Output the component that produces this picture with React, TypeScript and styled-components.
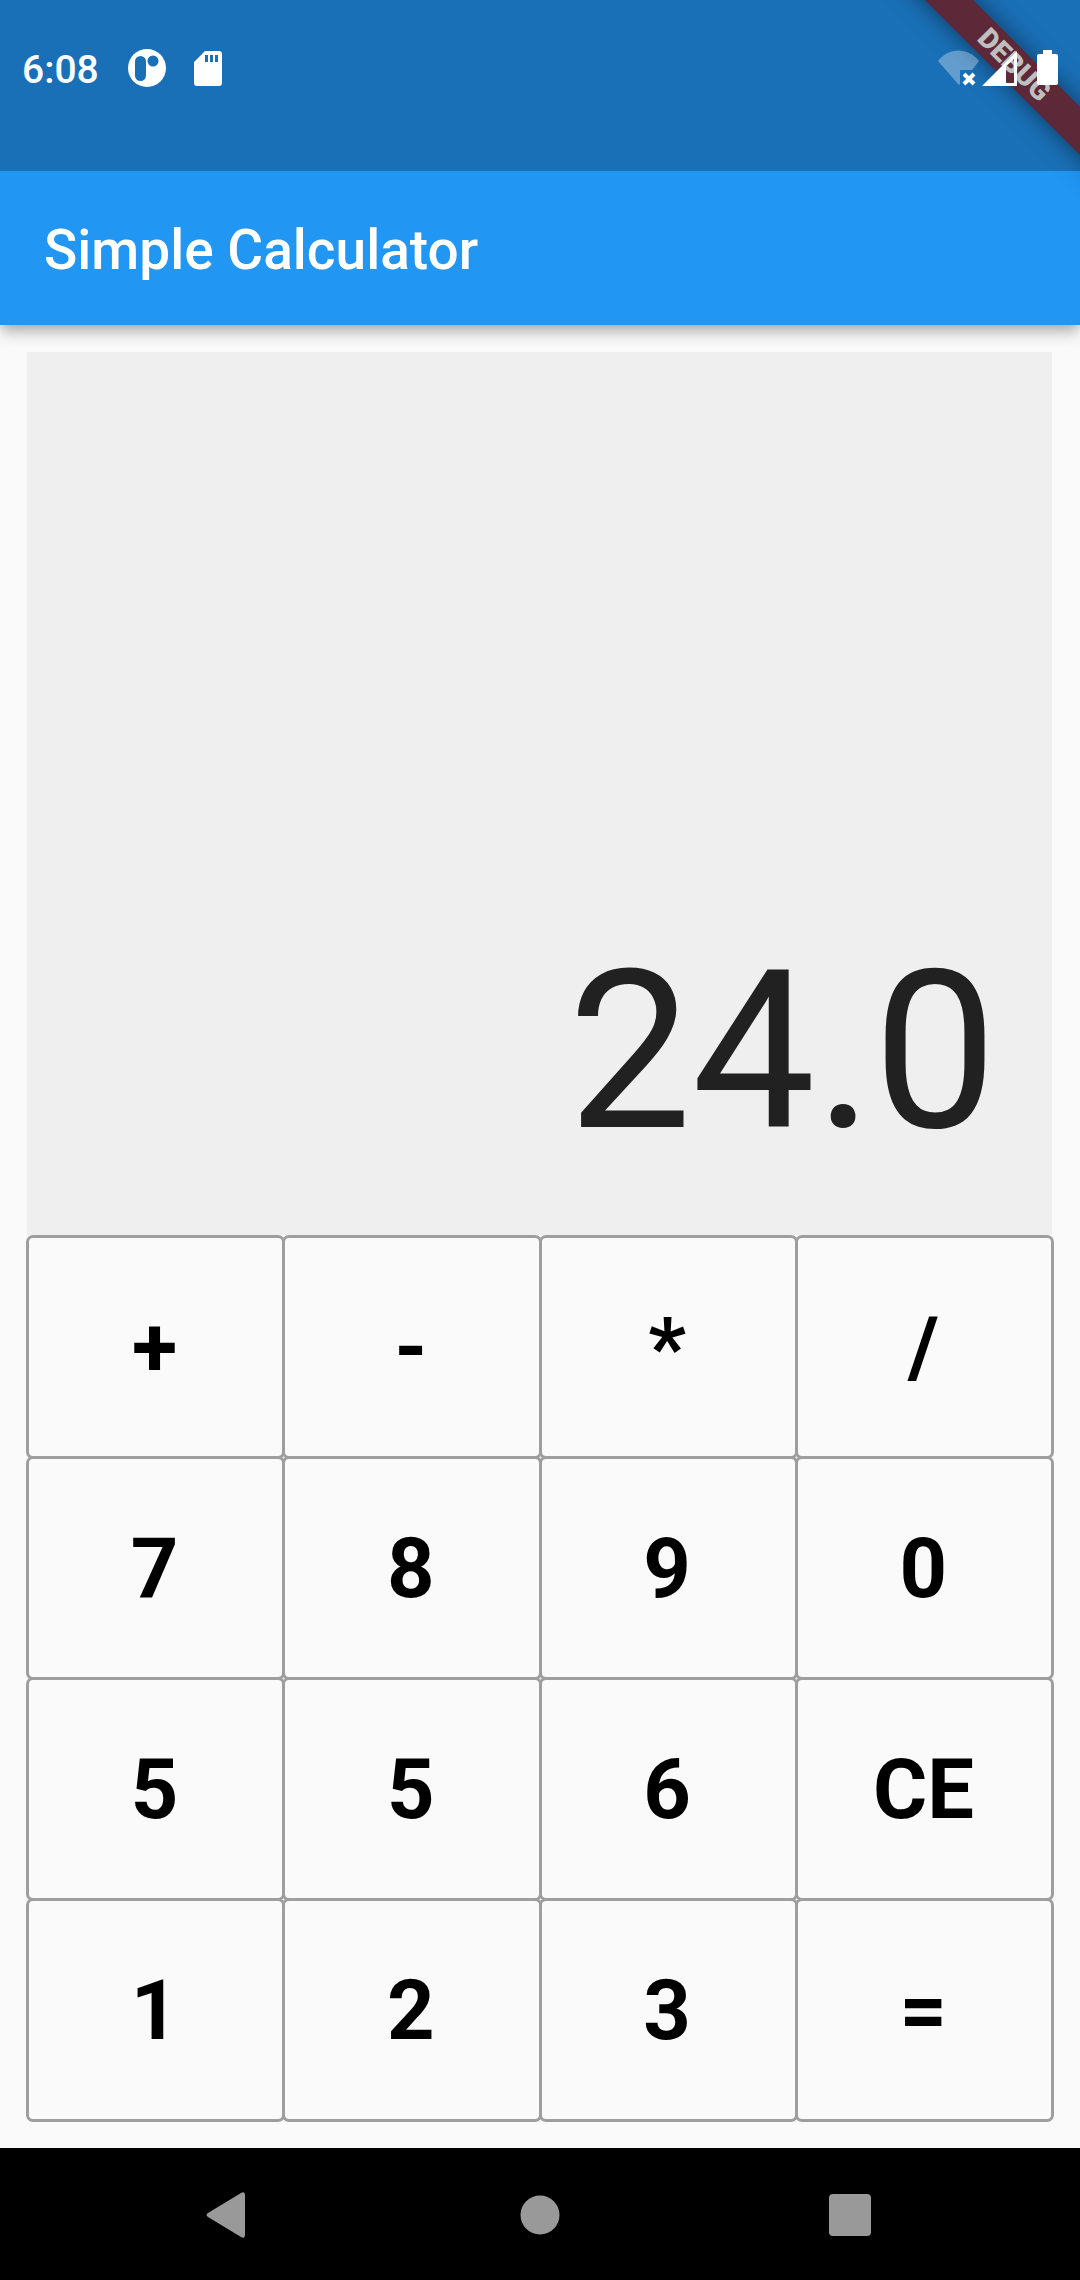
import React, { useState } from "react";
import styled, { createGlobalStyle } from "styled-components";

const GlobalStyle = createGlobalStyle`
  *, *::before, *::after { box-sizing: border-box; }
  html, body, #root { height: 100%; }
  body {
    margin: 0;
    background: #fafafa;
    font-family: Roboto, "Liberation Sans", sans-serif;
  }
`;

const Screen = styled.div`
  position: relative;
  display: flex;
  flex-direction: column;
  min-height: 100vh;
  overflow: hidden;
  background: #fafafa;
`;

const StatusBar = styled.header`
  display: flex;
  justify-content: space-between;
  align-items: flex-start;
  height: 171px;
  padding: 46px 22px 0;
  background: #1a70b7;
  color: #fff;
`;

const StatusGroup = styled.div`
  position: relative;
  z-index: 2;
  display: flex;
  align-items: center;
  height: 44px;
`;

const Clock = styled.time`
  padding-top: 4px;
  margin-right: 29px;
  font-size: 39px;
  line-height: 44px;
  font-weight: 500;
`;

const StatusIcon = styled.svg<{ $gap?: number }>`
  display: block;
  flex: none;
  margin-right: ${(p) => p.$gap ?? 0}px;
`;

const DebugRibbon = styled.div`
  position: absolute;
  z-index: 1;
  top: 48px;
  right: -94px;
  width: 320px;
  height: 34px;
  transform: rotate(45deg);
  background: #5d2838;
  box-shadow: 0 0 24px rgba(0, 0, 0, 0.5);
  color: #bfbfbf;
  font-size: 28px;
  line-height: 34px;
  font-weight: 900;
  text-align: center;
`;

/* The clip keeps the shadow from rising over the status bar. */
const AppBar = styled.div`
  position: relative;
  display: flex;
  align-items: center;
  height: 154px;
  padding: 4px 44px 0;
  background: #2196f3;
  box-shadow: 0 6px 11px -3px rgba(0, 0, 0, 0.2), 0 11px 14px rgba(0, 0, 0, 0.1),
    0 3px 20px rgba(0, 0, 0, 0.1);
  clip-path: inset(0 0 -40px 0);
`;

const Title = styled.h1`
  margin: 0;
  color: #fff;
  font-size: 55px;
  line-height: 64px;
  font-weight: 500;
`;

const Calculator = styled.main`
  flex: 1;
  display: grid;
  grid-template-rows: 1fr 1fr;
  padding: 26px 29px 29px 26px;
`;

const Display = styled.output`
  display: flex;
  justify-content: flex-end;
  align-items: flex-end;
  margin: 1px -1px 0 1px;
  padding: 54px 55px;
  background: #efefef;
  color: #212121;
  font-size: 220px;
  line-height: 258px;
`;

const Keypad = styled.div`
  display: grid;
  grid-template-columns: repeat(4, 1fr);
  grid-template-rows: repeat(4, 1fr);
`;

/* Neighbouring keys share one 3px outline. */
const Key = styled.button`
  margin: 0 -3px -3px 0;
  padding: 1px 2px 0 0;
  border: 3px solid #9e9e9e;
  border-radius: 7px;
  background: #fafafa;
  color: #000;
  font-family: inherit;
  font-size: 83px;
  line-height: 96px;
  font-weight: 700;
`;

const NavBar = styled.nav`
  display: flex;
  justify-content: center;
  height: 132px;
  padding-top: 1px;
  background: #000;
`;

const NavButton = styled.button`
  display: flex;
  align-items: center;
  justify-content: center;
  width: 310px;
  padding: 0;
  border: 0;
  background: none;
  color: #999;
`;

const keys = ["+", "-", "*", "/", "7", "8", "9", "0", "5", "5", "6", "CE", "1", "2", "3", "="];

export default function App() {
  const [value, setValue] = useState("24.0");
  const press = (key: string) => {
    if (key === "CE") setValue("0");
    else if (/\d/.test(key)) setValue((v) => (v === "0" ? key : (v + key).slice(0, 7)));
  };

  return (
    <Screen>
      <GlobalStyle />
      <StatusBar>
        <StatusGroup>
          <Clock>6:08</Clock>
          <StatusIcon $gap={28} width="38" height="38" viewBox="0 0 38 38" aria-hidden="true">
            <circle cx="19" cy="19" r="19" fill="#fff" />
            <rect x="7" y="7" width="11" height="25" rx="5.5" fill="#1a70b7" />
            <circle cx="25" cy="12" r="5.5" fill="#1a70b7" />
          </StatusIcon>
          <StatusIcon width="28" height="35" viewBox="0 0 28 35" aria-hidden="true">
            <path
              fill="#fff"
              fillRule="evenodd"
              d="M11 0H25a3 3 0 0 1 3 3v29a3 3 0 0 1-3 3H3a3 3 0 0 1-3-3V11zM11 4v7h3V4zM16 4v7h3V4zM21 4v7h3V4z"
            />
          </StatusIcon>
        </StatusGroup>
        <StatusGroup>
          <StatusIcon $gap={3} width="41" height="36" viewBox="0 0 41 36" aria-hidden="true">
            <path fill="#fff" fillOpacity=".32" d="M0 11C11-3 30-3 41 11l-7 9H22v14l-1 1z" />
            <path stroke="#fff" strokeWidth="4" d="M26 24l10 10m0-10l-10 10" />
          </StatusIcon>
          <StatusIcon $gap={20} width="35" height="35" viewBox="0 0 35 35" aria-hidden="true">
            <path fill="#fff" fillRule="evenodd" d="M0 35L35 0v35zM24 15v17h8V8z" />
          </StatusIcon>
          <StatusIcon width="21" height="36" viewBox="0 0 21 36" aria-hidden="true">
            <path
              fill="#fff"
              d="M6 0h9v4h4a2 2 0 0 1 2 2v27a2 2 0 0 1-2 2H2a2 2 0 0 1-2-2V6a2 2 0 0 1 2-2h4z"
            />
          </StatusIcon>
        </StatusGroup>
      </StatusBar>
      <AppBar>
        <Title>Simple Calculator</Title>
      </AppBar>
      <DebugRibbon>DEBUG</DebugRibbon>
      <Calculator>
        <Display>{value}</Display>
        <Keypad>
          {keys.map((key, i) => (
            <Key key={i} type="button" onClick={() => press(key)}>
              {key}
            </Key>
          ))}
        </Keypad>
      </Calculator>
      <NavBar>
        <NavButton type="button" aria-label="Back">
          <svg width="48" height="46" viewBox="0 0 48 46" aria-hidden="true">
            <path fill="currentColor" d="M35 1q4-2 4 2v40q0 4-4 2L2 25q-3-2 0-4z" />
          </svg>
        </NavButton>
        <NavButton type="button" aria-label="Home">
          <svg width="40" height="40" viewBox="0 0 40 40" aria-hidden="true">
            <circle cx="20" cy="20" r="19.5" fill="currentColor" />
          </svg>
        </NavButton>
        <NavButton type="button" aria-label="Recent apps">
          <svg width="42" height="42" viewBox="0 0 42 42" aria-hidden="true">
            <rect width="42" height="42" rx="4" fill="currentColor" />
          </svg>
        </NavButton>
      </NavBar>
    </Screen>
  );
}
